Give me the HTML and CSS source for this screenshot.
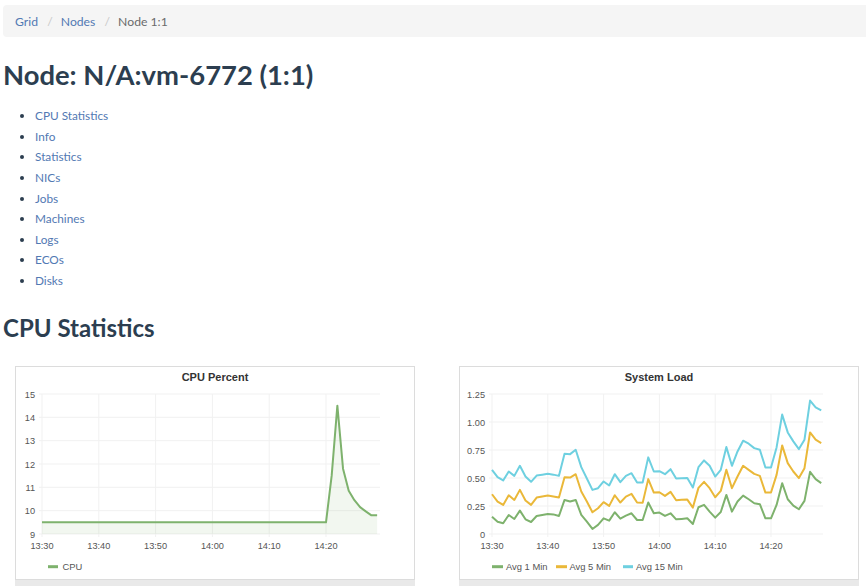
FILE: index.html
```html
<!DOCTYPE html>
<html lang="en">
<head>
<meta charset="utf-8">
<title>Node 1:1</title>
<link rel="stylesheet" href="styles.css">
</head>
<body>
<ol class="crumbs">
  <li><a href="#">Grid</a></li>
  <li><a href="#">Nodes</a></li>
  <li class="active">Node 1:1</li>
</ol>
<h1 class="title">Node: N/A:vm-6772 (1:1)</h1>
<ul class="toc">
  <li><a href="#">CPU Statistics</a></li>
  <li><a href="#">Info</a></li>
  <li><a href="#">Statistics</a></li>
  <li><a href="#">NICs</a></li>
  <li><a href="#">Jobs</a></li>
  <li><a href="#">Machines</a></li>
  <li><a href="#">Logs</a></li>
  <li><a href="#">ECOs</a></li>
  <li><a href="#">Disks</a></li>
</ul>
<h2 class="section">CPU Statistics</h2>
<div class="charts">
  <div class="panel">
    <div class="chart-box">
      <svg class="chart" width="398" height="212" viewBox="0 0 398 212">
        <text class="ch-title" x="199" y="14">CPU Percent</text>
        <g class="grid">
          <line x1="23" y1="27" x2="364" y2="27"/>
          <line x1="23" y1="50.3" x2="364" y2="50.3"/>
          <line x1="23" y1="73.7" x2="364" y2="73.7"/>
          <line x1="23" y1="97" x2="364" y2="97"/>
          <line x1="23" y1="120.3" x2="364" y2="120.3"/>
          <line x1="23" y1="143.7" x2="364" y2="143.7"/>
          <line x1="23" y1="167" x2="364" y2="167"/>
          <line x1="26" y1="27" x2="26" y2="170"/>
          <line x1="82.8" y1="27" x2="82.8" y2="170"/>
          <line x1="139.6" y1="27" x2="139.6" y2="170"/>
          <line x1="196.4" y1="27" x2="196.4" y2="170"/>
          <line x1="253.2" y1="27" x2="253.2" y2="170"/>
          <line x1="310" y1="27" x2="310" y2="170"/>
        </g>
        <g class="ylab">
          <text x="19" y="30.5">15</text>
          <text x="19" y="53.8">14</text>
          <text x="19" y="77.2">13</text>
          <text x="19" y="100.5">12</text>
          <text x="19" y="123.8">11</text>
          <text x="19" y="147.2">10</text>
          <text x="19" y="170.5">9</text>
        </g>
        <g class="xlab">
          <text x="26" y="182">13:30</text>
          <text x="82.8" y="182">13:40</text>
          <text x="139.6" y="182">13:50</text>
          <text x="196.4" y="182">14:00</text>
          <text x="253.2" y="182">14:10</text>
          <text x="310" y="182">14:20</text>
        </g>
        <polygon class="area" data-series="cpu" data-chart="cpu"></polygon>
        <polyline class="line green" data-series="cpu" data-chart="cpu"></polyline>
        <g class="legend">
          <line class="green" x1="32" y1="199.7" x2="42" y2="199.7"/>
          <text x="46.5" y="203.2">CPU</text>
        </g>
      </svg>
    </div>
    <div class="panel-foot"></div>
  </div>
  <div class="panel">
    <div class="chart-box">
      <svg class="chart" width="398" height="212" viewBox="0 0 398 212">
        <text class="ch-title" x="199" y="14">System Load</text>
        <g class="grid">
          <line x1="29" y1="27" x2="363" y2="27"/>
          <line x1="29" y1="55" x2="363" y2="55"/>
          <line x1="29" y1="83" x2="363" y2="83"/>
          <line x1="29" y1="111" x2="363" y2="111"/>
          <line x1="29" y1="139" x2="363" y2="139"/>
          <line x1="29" y1="167" x2="363" y2="167"/>
          <line x1="32" y1="27" x2="32" y2="170"/>
          <line x1="87.8" y1="27" x2="87.8" y2="170"/>
          <line x1="143.6" y1="27" x2="143.6" y2="170"/>
          <line x1="199.4" y1="27" x2="199.4" y2="170"/>
          <line x1="255.2" y1="27" x2="255.2" y2="170"/>
          <line x1="311" y1="27" x2="311" y2="170"/>
        </g>
        <g class="ylab">
          <text x="25" y="30.5">1.25</text>
          <text x="25" y="58.5">1.00</text>
          <text x="25" y="86.5">0.75</text>
          <text x="25" y="114.5">0.50</text>
          <text x="25" y="142.5">0.25</text>
          <text x="25" y="170.5">0</text>
        </g>
        <g class="xlab">
          <text x="32" y="182">13:30</text>
          <text x="87.8" y="182">13:40</text>
          <text x="143.6" y="182">13:50</text>
          <text x="199.4" y="182">14:00</text>
          <text x="255.2" y="182">14:10</text>
          <text x="311" y="182">14:20</text>
        </g>
        <polyline class="line cyan" data-series="load15" data-chart="load"></polyline>
        <polyline class="line orange" data-series="load5" data-chart="load"></polyline>
        <polyline class="line green" data-series="load1" data-chart="load"></polyline>
        <g class="legend">
          <line class="green" x1="32" y1="199.7" x2="43" y2="199.7"/>
          <text x="46" y="203.2">Avg 1 Min</text>
          <line class="orange" x1="96" y1="199.7" x2="107" y2="199.7"/>
          <text x="109.5" y="203.2">Avg 5 Min</text>
          <line class="cyan" x1="163" y1="199.7" x2="173" y2="199.7"/>
          <text x="176" y="203.2">Avg 15 Min</text>
        </g>
      </svg>
    </div>
    <div class="panel-foot"></div>
  </div>
</div>
<script src="script.js"></script>
</body>
</html>
```

FILE: styles.css
```css
html, body {
  margin: 0;
  padding: 0;
  background: #fff;
}
body {
  font-family: Lato, "Open Sans", "Liberation Sans", sans-serif;
  color: #2c3e50;
  padding: 5px 0 0 3px;
  overflow: hidden;
}
a {
  color: #5279b3;
  text-decoration: none;
}
.crumbs {
  list-style: none;
  margin: 0;
  padding: 9px 12px 7px;
  font-size: 12.2px;
  line-height: 16px;
  background: #f5f5f5;
  border-radius: 4px 0 0 4px;
}
.crumbs li {
  display: inline-block;
}
.crumbs li + li::before {
  content: "/\00a0";
  padding: 0 5px 0 6px;
  color: #c8c8c8;
}
.crumbs .active {
  color: #6b6b6b;
}
.title {
  margin: 22px 0 0 0;
  font-size: 27.4px;
  line-height: 1.2;
  font-weight: 700;
  color: #2c3e50;
}
.toc {
  margin: 14px 0 0 0;
  padding-left: 32px;
  font-size: 11.8px;
  line-height: 20.65px;
}
.toc li::marker {
  color: #2c3e50;
}
.section {
  margin: 22px 0 0 0;
  font-size: 24px;
  line-height: 1.2;
  font-weight: 700;
  color: #2c3e50;
}
.charts {
  display: grid;
  grid-template-columns: 400px 400px;
  column-gap: 44px;
  margin-top: 23px;
  padding-left: 12px;
}
.chart-box {
  border: 1px solid #dcdcdc;
  height: 212px;
  background: #fff;
}
.chart {
  display: block;
  font-family: "Liberation Sans", Arial, sans-serif;
}
.panel-foot {
  height: 6px;
  background: #e9e9e9;
}
.ch-title {
  font-size: 11px;
  font-weight: 700;
  fill: #333;
  text-anchor: middle;
}
.grid line {
  stroke: #f1f1f1;
  stroke-width: 1;
}
.ylab text {
  font-size: 9.2px;
  fill: #555;
  text-anchor: end;
}
.xlab text {
  font-size: 9.2px;
  fill: #555;
  text-anchor: middle;
}
.legend text {
  font-size: 9.4px;
  fill: #555;
}
.legend line {
  stroke-width: 3;
}
.line {
  fill: none;
  stroke-width: 2;
  stroke-linejoin: round;
}
.area {
  fill: rgba(126, 178, 109, 0.1);
  stroke: none;
}
.green { stroke: #7eb26d; }
.orange { stroke: #eab839; }
.cyan { stroke: #6ed0e0; }
```

FILE: script.js
```js
(function () {
  var cpu = [];
  for (var i = 0; i <= 50; i++) cpu.push(9.5);
  cpu = cpu.concat([11.5, 14.5, 11.8, 10.85, 10.45, 10.15, 9.97, 9.8, 9.8]);

  var series = {
    cpu: cpu,
    load15: [0.573,0.507,0.478,0.558,0.519,0.609,0.513,0.466,0.522,0.53,
      0.537,0.53,0.519,0.716,0.713,0.752,0.597,0.496,0.394,0.409,
      0.469,0.433,0.534,0.463,0.519,0.543,0.46,0.46,0.684,0.558,
      0.561,0.534,0.579,0.496,0.497,0.499,0.415,0.597,0.657,0.609,
      0.513,0.573,0.776,0.609,0.737,0.833,0.806,0.767,0.752,0.594,
      0.594,0.773,1.066,0.907,0.827,0.758,0.842,1.191,1.131,1.104],
    load5: [0.355,0.29,0.26,0.346,0.304,0.394,0.299,0.26,0.325,0.335,
      0.343,0.335,0.325,0.507,0.504,0.534,0.379,0.29,0.194,0.23,
      0.284,0.251,0.346,0.281,0.334,0.358,0.281,0.278,0.49,0.37,
      0.373,0.34,0.376,0.301,0.305,0.307,0.236,0.412,0.466,0.409,
      0.328,0.385,0.573,0.409,0.513,0.609,0.573,0.537,0.519,0.37,
      0.37,0.528,0.791,0.633,0.558,0.499,0.588,0.907,0.842,0.812],
    load1: [0.155,0.11,0.096,0.17,0.134,0.209,0.131,0.107,0.161,0.17,
      0.179,0.175,0.161,0.304,0.29,0.304,0.17,0.11,0.045,0.081,
      0.14,0.119,0.194,0.137,0.164,0.185,0.125,0.125,0.281,0.185,
      0.191,0.161,0.185,0.131,0.135,0.14,0.09,0.239,0.26,0.2,
      0.146,0.197,0.349,0.2,0.29,0.343,0.31,0.275,0.266,0.14,
      0.14,0.26,0.454,0.31,0.254,0.221,0.296,0.555,0.49,0.454]
  };

  var scales = {
    cpu: { x0: 26, dx: 5.68, y0: 167, vmin: 9, dy: 23.333 },
    load: { x0: 32, dx: 5.58, y0: 167, vmin: 0, dy: 112 }
  };

  function pts(name, chart) {
    var s = scales[chart];
    return series[name].map(function (v, i) {
      var x = s.x0 + i * s.dx;
      var y = s.y0 - (v - s.vmin) * s.dy;
      return x.toFixed(2) + "," + y.toFixed(2);
    });
  }

  document.querySelectorAll("polyline[data-series]").forEach(function (el) {
    el.setAttribute("points", pts(el.dataset.series, el.dataset.chart).join(" "));
  });
  document.querySelectorAll("polygon[data-series]").forEach(function (el) {
    var s = scales[el.dataset.chart];
    var p = pts(el.dataset.series, el.dataset.chart);
    var n = series[el.dataset.series].length - 1;
    p.push((s.x0 + n * s.dx).toFixed(2) + "," + s.y0);
    p.push(s.x0 + "," + s.y0);
    el.setAttribute("points", p.join(" "));
  });
})();
```
